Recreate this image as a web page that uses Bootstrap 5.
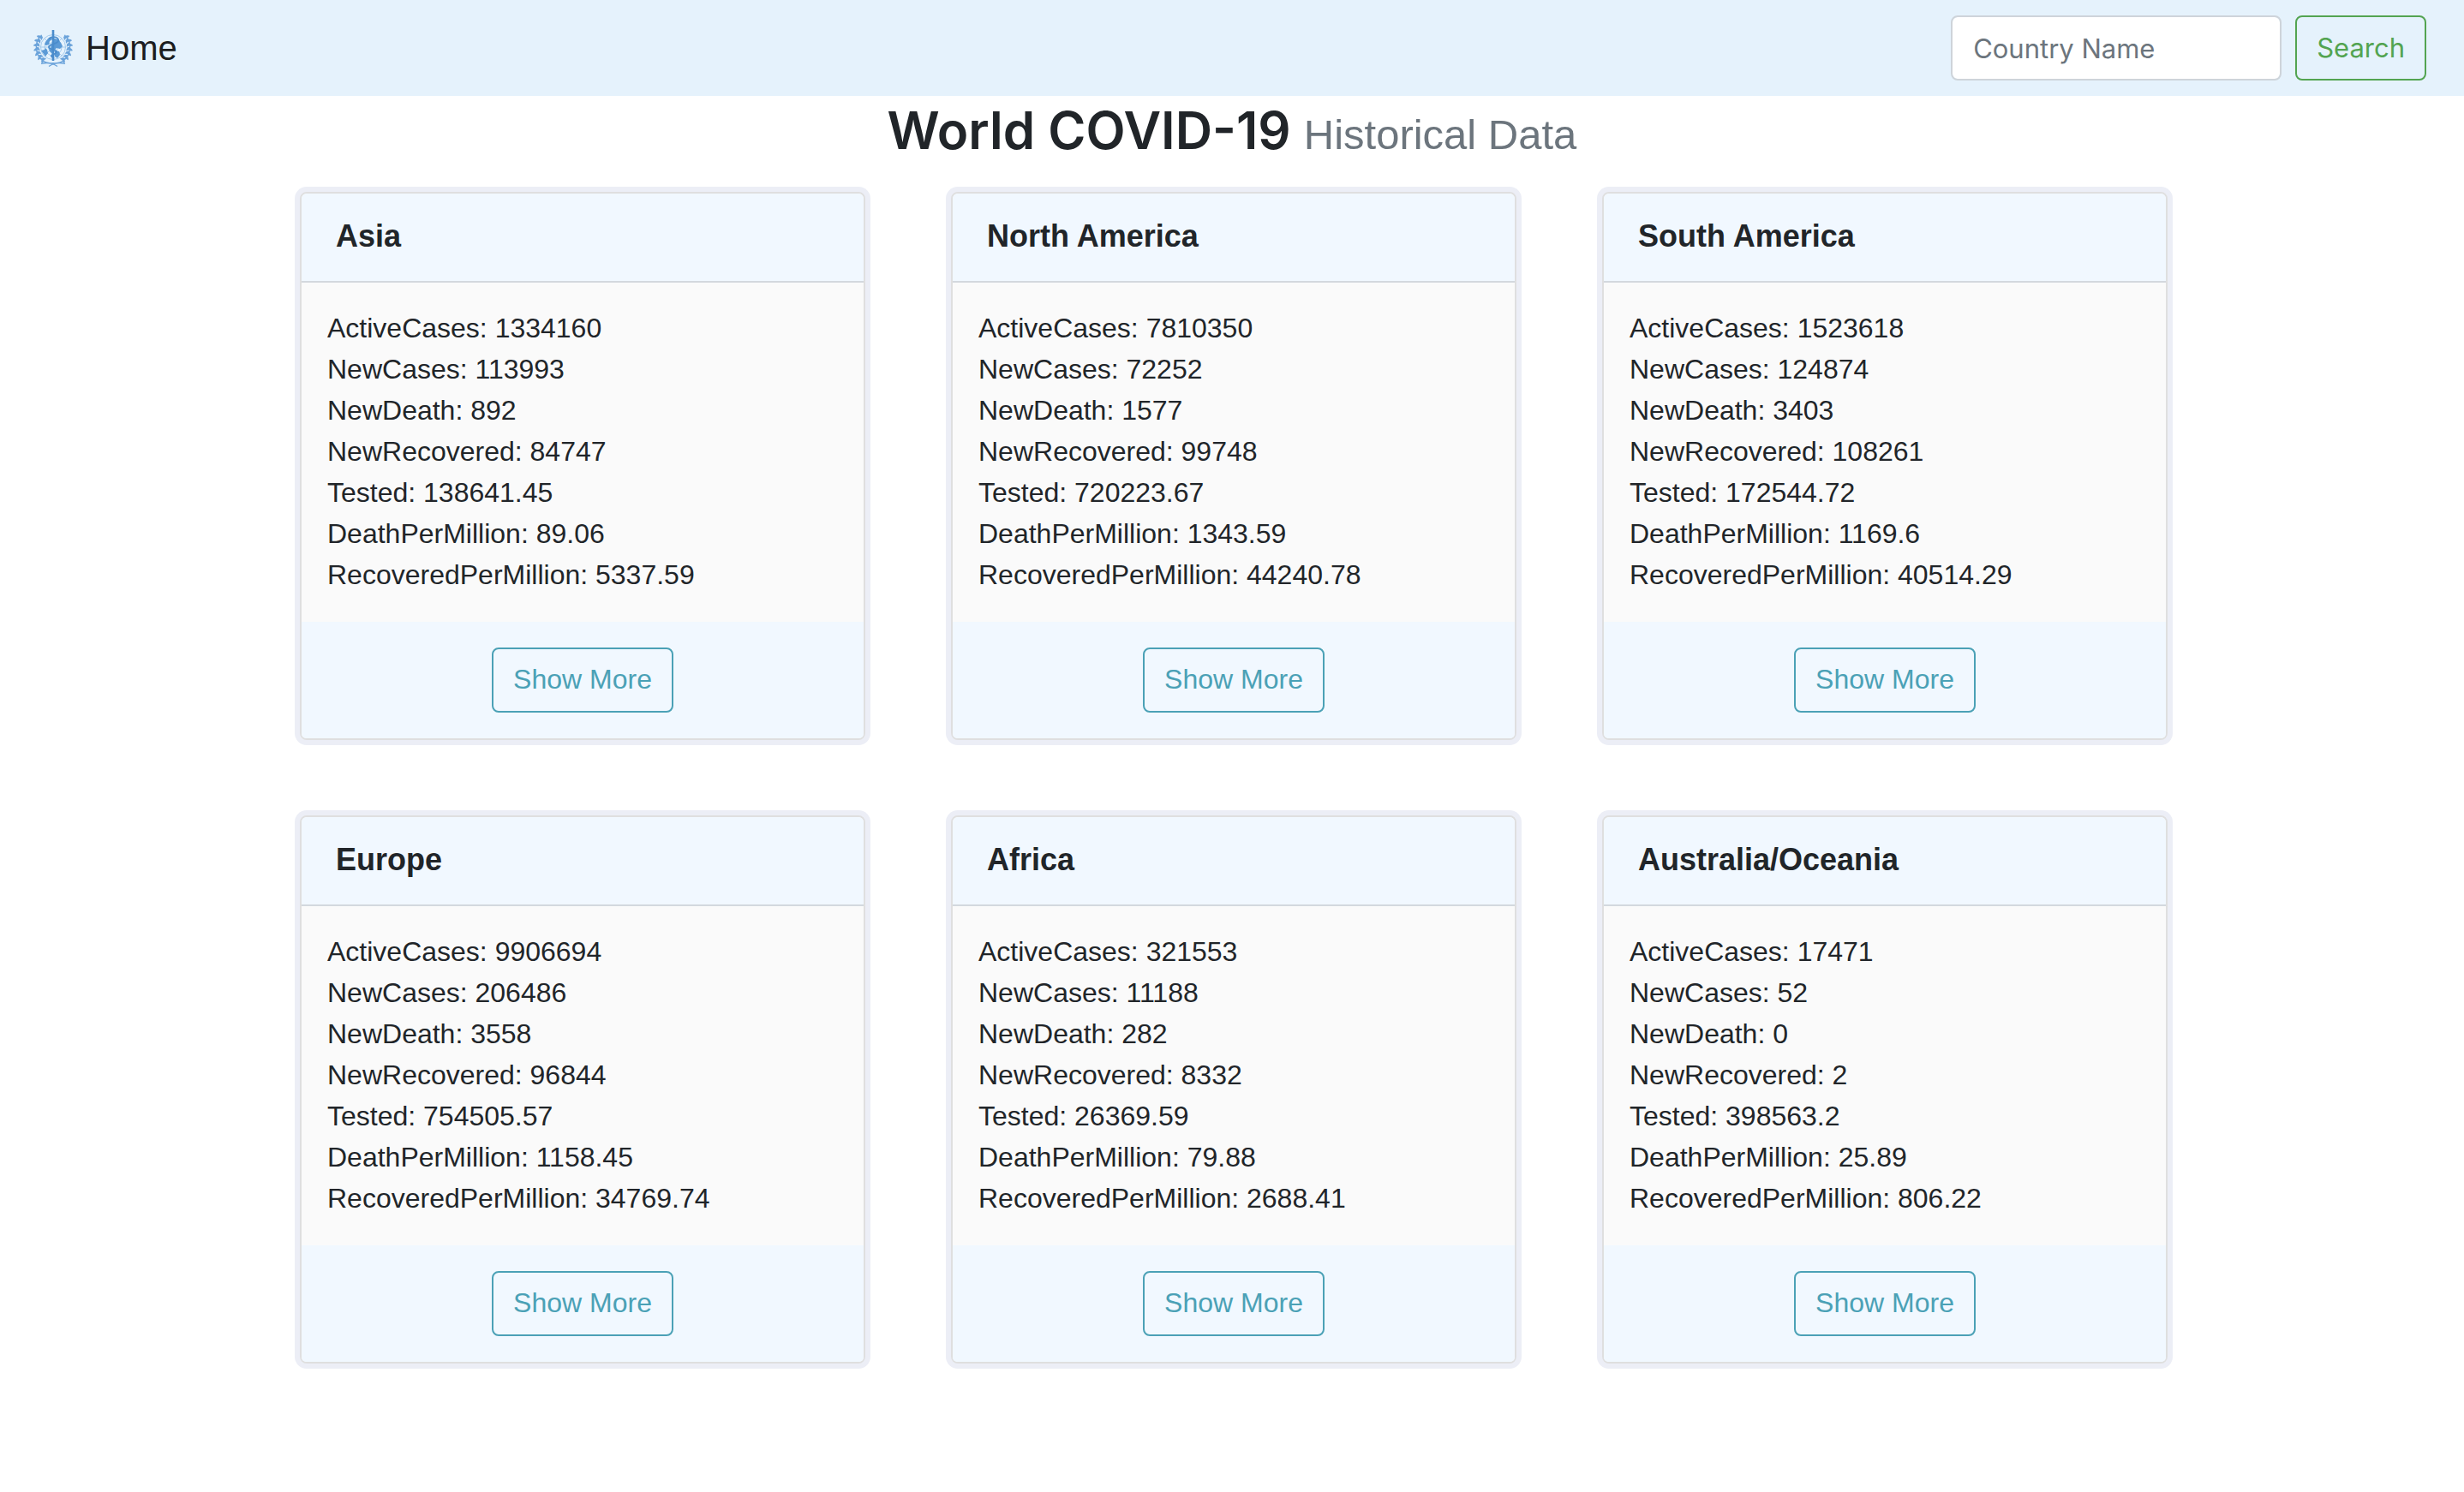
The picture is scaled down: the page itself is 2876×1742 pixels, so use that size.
<!DOCTYPE html>
<html lang="en">
<head>
<meta charset="utf-8">
<meta name="viewport" content="width=device-width, initial-scale=1">
<title>World COVID-19 Historical Data</title>
<link href="https://cdn.jsdelivr.net/npm/bootstrap@5.3.0/dist/css/bootstrap.min.css" rel="stylesheet">
<style>
  body { font-family: Inter, sans-serif; font-size: 32px; line-height: 48px; color: #212529; background: #fff; }
  .site-bar { background: #e5f2fc; padding: 18px 44px 18px 32px; }
  .site-bar .navbar-brand { font-family: "Liberation Sans", Arial, sans-serif; font-size: 40px; line-height: 60px; color: rgba(0,0,0,.9); padding: 0; margin: 0; }
  .brand-logo { width: 60px; height: 60px; }
  .country-box { width: 386px; height: 76px; font-size: 31px; padding: 12px 24px; border: 2px solid #ced4da; border-radius: 8px; }
  .country-box::placeholder { color: #6c757d; }
  .btn-look { height: 76px; line-height: 48px; border-width: 2px; border-radius: 8px; }
  .btn-search { font-size: 31px; padding: 12px 23px; --bs-btn-color: #53a451; --bs-btn-border-color: #53a451; --bs-btn-hover-bg: #53a451; --bs-btn-hover-color: #fff; --bs-btn-hover-border-color: #53a451; }
  .page-title { font-size: 60px; line-height: 76px; font-weight: 600; margin: 0; padding: 2px 0 22px; }
  .page-title small { font-family: "Liberation Sans", Arial, sans-serif; font-size: 49px; line-height: 1; font-weight: 400; color: #6c757d; }
  .region-grid { max-width: 2280px; }
  .region-cell { padding: 12px 48px 76px 52px; }
  .region-card { font-family: "Liberation Sans", Arial, sans-serif; color: #212529; background: #fafafa; border: 2px solid #dfdfdf; border-radius: 8px; box-shadow: 0 0 0 6px #eceef6; }
  .region-card .card-header { background: #f1f8ff; border-bottom: 2px solid #d3d8de; padding: 26px 40px 28px; border-radius: 6px 6px 0 0; }
  .region-name { font-size: 36px; line-height: 48px; font-weight: 700; margin: 0; }
  .region-card .card-body { padding: 29px 30px 31px; }
  .region-card .card-footer { background: #f1f8ff; border: 0; padding: 30px; }
  .btn-more { font-size: 32px; padding: 11px 23px 13px; --bs-btn-color: #4ba1b6; --bs-btn-border-color: #4ba1b6; --bs-btn-hover-bg: #4ba1b6; --bs-btn-hover-color: #fff; --bs-btn-hover-border-color: #4ba1b6; }
</style>
<script src="https://cdn.jsdelivr.net/npm/bootstrap@5.3.0/dist/js/bootstrap.bundle.min.js"></script>
</head>
<body>
<nav class="navbar site-bar d-flex justify-content-between">
  <a class="navbar-brand d-flex align-items-center gap-2" href="#">
    <svg class="brand-logo" viewBox="0 0 60 60" fill="none" aria-hidden="true">
      <defs>
        <g id="sprig">
          <path d="M0-23.500c2.200 1.800 2.200 5 .3 7.800-2-2.500-2.200-5.500-.3-7.800z" transform="rotate(-20 0 -19)"/>
          <path d="M0-21.500c1.800 1.800 1.800 4.600.2 6.800-1.800-2-1.900-4.700-.2-6.800z" transform="rotate(50 0 -17.500)"/>
        </g>
        <g id="laurel" fill="#6ba3da">
          <use href="#sprig" transform="rotate(-52)"/>
          <use href="#sprig" transform="rotate(-67)"/>
          <use href="#sprig" transform="rotate(-82)"/>
          <use href="#sprig" transform="rotate(-97)"/>
          <use href="#sprig" transform="rotate(-112)"/>
          <use href="#sprig" transform="rotate(-127)"/>
          <use href="#sprig" transform="rotate(-142)"/>
          <path d="M-14.500-13A19.500 19.500 0 0 0-11 16.500Q-7 19.500 0 18.500" fill="none" stroke="#6ba3da" stroke-width="1.200"/>
          <path d="M-14 19.500Q-7 17.500-1 19.500Q2 20.500 5 22.500" fill="none" stroke="#6ba3da" stroke-width="1.300"/>
        </g>
      </defs>
      <g transform="translate(30 29)">
        <use href="#laurel"/>
        <use href="#laurel" transform="scale(-1 1)"/>
        <g stroke="#9cc5ea" stroke-width=".9">
          <circle r="14.500"/><circle r="10"/><circle r="5.500"/>
          <path d="M-14.500 0H14.500M-10-10L10 10M10-10L-10 10"/>
        </g>
        <g fill="#5b9ad6">
          <path d="M-14 4l4-1 1-2 2 2 1 4-3 4-2-3z"/>
          <path d="M-9-6l3-4 4-2 1 3-3 2-1 4-3 1-2-1z"/>
          <path d="M1-10l5 1 3 4 2 4-3 3-4-1-3 3-4-2 1-5z"/>
          <path d="M2 4l5 1 1 4-3 4-3-2z"/>
          <path d="M-5 2l4 1 0 5-3-3z"/>
        </g>
        <path d="M0-20V16" stroke="#4a8ccc" stroke-width="2.600"/>
        <path d="M-5-10C1-14 7-11 6-7C5-4-5-3-5 0C-5 3 5 3 4 6C3 9-3 8-2 11L1 13" stroke="#4a8ccc" stroke-width="1.700"/>
      </g>
    </svg>
    <span>Home</span>
  </a>
  <form class="d-flex gap-3" role="search">
    <input class="form-control country-box" type="search" placeholder="Country Name" aria-label="Country Name">
    <button class="btn btn-look btn-search" type="submit">Search</button>
  </form>
</nav>
<h2 class="page-title text-center">World COVID-19 <small>Historical Data</small></h2>
<main class="region-grid mx-auto">
  <div class="row g-0">
    <div class="col-4 region-cell">
      <div class="card region-card">
        <div class="card-header"><h5 class="region-name">Asia</h5></div>
        <div class="card-body">
          <div>ActiveCases: 1334160</div>
          <div>NewCases: 113993</div>
          <div>NewDeath: 892</div>
          <div>NewRecovered: 84747</div>
          <div>Tested: 138641.45</div>
          <div>DeathPerMillion: 89.06</div>
          <div>RecoveredPerMillion: 5337.59</div>
        </div>
        <div class="card-footer d-flex justify-content-center"><button type="button" class="btn btn-look btn-more">Show More</button></div>
      </div>
    </div>
    <div class="col-4 region-cell">
      <div class="card region-card">
        <div class="card-header"><h5 class="region-name">North America</h5></div>
        <div class="card-body">
          <div>ActiveCases: 7810350</div>
          <div>NewCases: 72252</div>
          <div>NewDeath: 1577</div>
          <div>NewRecovered: 99748</div>
          <div>Tested: 720223.67</div>
          <div>DeathPerMillion: 1343.59</div>
          <div>RecoveredPerMillion: 44240.78</div>
        </div>
        <div class="card-footer d-flex justify-content-center"><button type="button" class="btn btn-look btn-more">Show More</button></div>
      </div>
    </div>
    <div class="col-4 region-cell">
      <div class="card region-card">
        <div class="card-header"><h5 class="region-name">South America</h5></div>
        <div class="card-body">
          <div>ActiveCases: 1523618</div>
          <div>NewCases: 124874</div>
          <div>NewDeath: 3403</div>
          <div>NewRecovered: 108261</div>
          <div>Tested: 172544.72</div>
          <div>DeathPerMillion: 1169.6</div>
          <div>RecoveredPerMillion: 40514.29</div>
        </div>
        <div class="card-footer d-flex justify-content-center"><button type="button" class="btn btn-look btn-more">Show More</button></div>
      </div>
    </div>
    <div class="col-4 region-cell">
      <div class="card region-card">
        <div class="card-header"><h5 class="region-name">Europe</h5></div>
        <div class="card-body">
          <div>ActiveCases: 9906694</div>
          <div>NewCases: 206486</div>
          <div>NewDeath: 3558</div>
          <div>NewRecovered: 96844</div>
          <div>Tested: 754505.57</div>
          <div>DeathPerMillion: 1158.45</div>
          <div>RecoveredPerMillion: 34769.74</div>
        </div>
        <div class="card-footer d-flex justify-content-center"><button type="button" class="btn btn-look btn-more">Show More</button></div>
      </div>
    </div>
    <div class="col-4 region-cell">
      <div class="card region-card">
        <div class="card-header"><h5 class="region-name">Africa</h5></div>
        <div class="card-body">
          <div>ActiveCases: 321553</div>
          <div>NewCases: 11188</div>
          <div>NewDeath: 282</div>
          <div>NewRecovered: 8332</div>
          <div>Tested: 26369.59</div>
          <div>DeathPerMillion: 79.88</div>
          <div>RecoveredPerMillion: 2688.41</div>
        </div>
        <div class="card-footer d-flex justify-content-center"><button type="button" class="btn btn-look btn-more">Show More</button></div>
      </div>
    </div>
    <div class="col-4 region-cell">
      <div class="card region-card">
        <div class="card-header"><h5 class="region-name">Australia/Oceania</h5></div>
        <div class="card-body">
          <div>ActiveCases: 17471</div>
          <div>NewCases: 52</div>
          <div>NewDeath: 0</div>
          <div>NewRecovered: 2</div>
          <div>Tested: 398563.2</div>
          <div>DeathPerMillion: 25.89</div>
          <div>RecoveredPerMillion: 806.22</div>
        </div>
        <div class="card-footer d-flex justify-content-center"><button type="button" class="btn btn-look btn-more">Show More</button></div>
      </div>
    </div>
  </div>
</main>
</body>
</html>
